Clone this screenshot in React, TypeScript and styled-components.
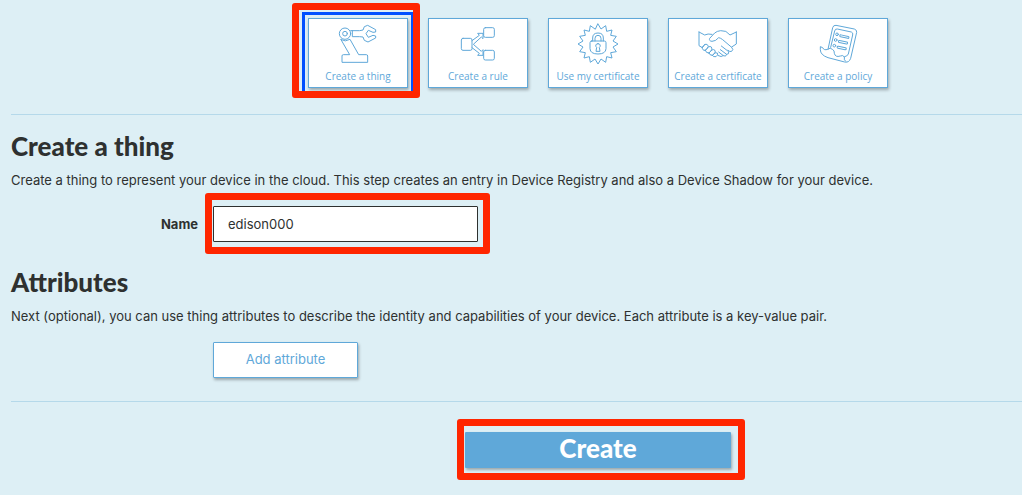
import React from "react";
import styled, { createGlobalStyle, css } from "styled-components";

const color = {
  page: "#ddeff5",
  ink: "#2e3130",
  blue: "#5fa8d9",
  rule: "#b5d9ea",
  red: "#ff2600",
  focus: "#0050ff",
};

const display = `Lato, "Open Sans", sans-serif`;

const GlobalStyle = createGlobalStyle`
  *, *::before, *::after { box-sizing: border-box; }
  body {
    margin: 0;
    background: ${color.page};
    color: ${color.ink};
    font-family: Inter, "Open Sans", sans-serif;
    font-size: 13px;
    line-height: 20px;
  }
  h2, p { margin: 0; }
  button, input { font: inherit; }
`;

const Page = styled.main`
  padding: 18px 0 24px 11px;
`;

const raised = css`
  box-shadow: 1px 2px 3px rgba(0, 0, 0, 0.3);
`;

const Centered = styled.div`
  display: flex;
  justify-content: center;
  gap: 20px;
  padding-left: 163px;
`;

const Rule = styled.hr`
  height: 1px;
  margin: 0;
  border: 0;
  background: ${color.rule};
`;

const Highlight = styled.div<{ $gap: string }>`
  position: relative;
  display: flex;

  &::after {
    content: "";
    position: absolute;
    inset: ${(p) => p.$gap};
    border: 7px solid ${color.red};
    border-radius: 3px;
    pointer-events: none;
  }
`;

const Card = styled.button<{ $active?: boolean }>`
  display: flex;
  flex-direction: column;
  align-items: center;
  width: 100px;
  height: 70px;
  padding: 0;
  border: 1px solid ${color.blue};
  background: #fff;
  color: ${color.blue};
  font-family: "Open Sans", sans-serif;
  font-size: 10px;
  line-height: 18px;
  white-space: nowrap;
  cursor: pointer;
  ${raised}
  ${(p) => p.$active && css`
    outline: 3px solid ${color.focus};
    outline-offset: 3px;
  `}
`;

const Glyph = styled.svg`
  display: block;
  width: 98px;
  height: 48px;
  fill: none;
  stroke: currentColor;
  stroke-width: 3;
  stroke-linejoin: round;
  stroke-linecap: round;
`;

const Section = styled.section<{ $top: number }>`
  padding-top: ${(p) => p.$top}px;
`;

const Title = styled.h2`
  font-family: ${display};
  font-size: 26px;
  font-weight: 900;
  line-height: 32px;
`;

const Text = styled.p`
  margin-top: 8px;
`;

const Row = styled.div<{ $top: number }>`
  display: grid;
  grid-template-columns: 187px 1fr;
  column-gap: 15px;
  align-items: center;
  justify-items: start;
  padding-top: ${(p) => p.$top}px;
`;

const Label = styled.label`
  justify-self: end;
  font-weight: 700;
`;

const Field = styled.input`
  width: 265px;
  height: 36px;
  padding: 0 14px;
  border: 1px solid ${color.ink};
  border-radius: 1px;
  background: #fff;
  color: ${color.ink};
`;

const AddButton = styled.button`
  grid-column: 2;
  width: 145px;
  height: 36px;
  padding: 0 0 2px;
  border: 1px solid ${color.blue};
  border-radius: 1px;
  background: #fff;
  color: ${color.blue};
  cursor: pointer;
  ${raised}
`;

const CreateButton = styled.button`
  width: 266px;
  height: 36px;
  padding: 0 0 4px;
  border: 0;
  border-radius: 1px;
  background: ${color.blue};
  color: #fff;
  font-family: ${display};
  font-size: 26px;
  font-weight: 900;
  line-height: 32px;
  cursor: pointer;
  ${raised}
`;

const sealPoints = Array.from({ length: 32 }, (_, i) => {
  const radius = i % 2 ? 46 : 60;
  const angle = (i * Math.PI) / 16 - Math.PI / 2;
  return `${Math.round(174 + radius * Math.cos(angle))},${Math.round(102 + radius * Math.sin(angle))}`;
}).join(" ");

const RobotArm = () => (
  <Glyph viewBox="72 57 294 144" aria-hidden="true">
    <circle cx="180" cy="101" r="17" />
    <circle cx="180" cy="101" r="7" />
    <path d="M197 92H224L234 90L238 80L248 76L272 89V96L264 97L250 91L243 101L250 112L264 106L272 108V114L249 126L238 121L234 111L224 110H202V92" />
    <path d="M168 119L194 164H175Q171 164 171 168V187H248V168Q248 164 244 164H221L195 118Q181 127 168 119Z" />
  </Glyph>
);

const RuleFlow = () => (
  <Glyph viewBox="27 27 294 144" aria-hidden="true">
    <rect x="124" y="85" width="32" height="36" rx="5" />
    <rect x="191" y="53" width="32" height="29" rx="5" />
    <rect x="191" y="121" width="32" height="29" rx="5" />
    <path d="M156 92L178 76L173 70H189V86L184 81L160 103L184 124L189 119V136H173L178 130L156 113" />
  </Glyph>
);

const Seal = () => (
  <Glyph viewBox="27 27 294 144" aria-hidden="true">
    <polygon points={sealPoints} />
    <path d="M155 93H193Q198 93 198 98V116Q197 132 174 132T150 116V98Q150 93 155 93Z" />
    <path d="M158 93V84Q158 69 174 69T190 84V93M165 93V85Q165 76 174 76T183 85V93" />
    <path d="M174 101A6 6 0 0 1 178 112L180 124H168L170 112A6 6 0 0 1 174 101Z" />
  </Glyph>
);

const Handshake = () => (
  <Glyph viewBox="27 27 294 144" aria-hidden="true">
    <path d="M117 66L134 75Q143 70 156 73M117 66V107L127 113L135 103M229 66L210 75Q199 60 182 62Q171 63 164 69L149 85Q146 93 156 94Q167 94 176 83Q182 84 188 89L215 112Q222 119 215 124Q210 127 204 121M229 66V102L215 111" />
    <path d="M127 112Q134 99 142 104Q148 108 142 115L136 121Q126 122 127 112ZM136 121Q147 105 154 111Q159 117 152 124L147 129Q138 130 136 121ZM147 129Q157 115 164 120Q169 126 162 132L157 136Q148 136 147 129ZM157 136Q166 124 172 129Q176 135 168 140Q159 142 157 136Z" />
    <path d="M184 108L206 125Q208 133 200 133L181 119M200 133Q198 142 190 137L176 126M190 137Q184 143 175 137" />
  </Glyph>
);

const Scroll = () => (
  <Glyph viewBox="27 27 294 144" aria-hidden="true">
    <path d="M144 118L158 53Q160 45 168 46L223 57Q231 60 230 67L212 145Q207 159 194 156L144 143Q121 135 121 119V110L128 113Q132 122 143 118Q151 111 157 118Q164 121 163 130Q166 143 181 138Q189 134 193 141Q191 151 197 154" />
    <path d="M152 112L164 63Q165 56 172 57L214 66Q220 68 218 75L205 132Q201 140 194 140" />
    <g>
      <circle cx="171" cy="73" r="4" />
      <rect x="180" y="74" width="28" height="6" rx="3" transform="rotate(12 180 74)" />
      <circle cx="167" cy="90" r="4" />
      <rect x="176" y="91" width="28" height="6" rx="3" transform="rotate(12 176 91)" />
      <circle cx="163" cy="107" r="4" />
      <rect x="172" y="108" width="28" height="6" rx="3" transform="rotate(12 172 108)" />
    </g>
  </Glyph>
);

export default function App() {
  return (
    <>
      <GlobalStyle />
      <Page>
        <Centered as="nav" aria-label="Resources">
          <Highlight $gap="-15px -12px -10px -16px">
            <Card type="button" $active>
              <RobotArm />
              Create a thing
            </Card>
          </Highlight>
          <Card type="button">
            <RuleFlow />
            Create a rule
          </Card>
          <Card type="button">
            <Seal />
            Use my certificate
          </Card>
          <Card type="button">
            <Handshake />
            Create a certificate
          </Card>
          <Card type="button">
            <Scroll />
            Create a policy
          </Card>
        </Centered>

        <Section $top={26}>
          <Rule />
        </Section>
        <Section $top={15}>
          <Title>Create a thing</Title>
          <Text>Create a thing to represent your device in the cloud. This step creates an entry in Device Registry and also a Device Shadow for your device.</Text>
          <Row $top={16}>
            <Label htmlFor="thing-name">Name</Label>
            <Highlight $gap="-13px -12px -12px -8px">
              <Field id="thing-name" type="text" defaultValue="edison000" />
            </Highlight>
          </Row>
        </Section>

        <Section $top={24}>
          <Title>Attributes</Title>
          <Text>Next (optional), you can use thing attributes to describe the identity and capabilities of your device. Each attribute is a key-value pair.</Text>
          <Row $top={16}>
            <AddButton type="button">Add attribute</AddButton>
          </Row>
        </Section>

        <Section $top={23}>
          <Rule />
        </Section>
        <Section $top={30}>
          <Centered>
            <Highlight $gap="-13px -14px -12px -8px">
              <CreateButton type="button">Create</CreateButton>
            </Highlight>
          </Centered>
        </Section>
      </Page>
    </>
  );
}
